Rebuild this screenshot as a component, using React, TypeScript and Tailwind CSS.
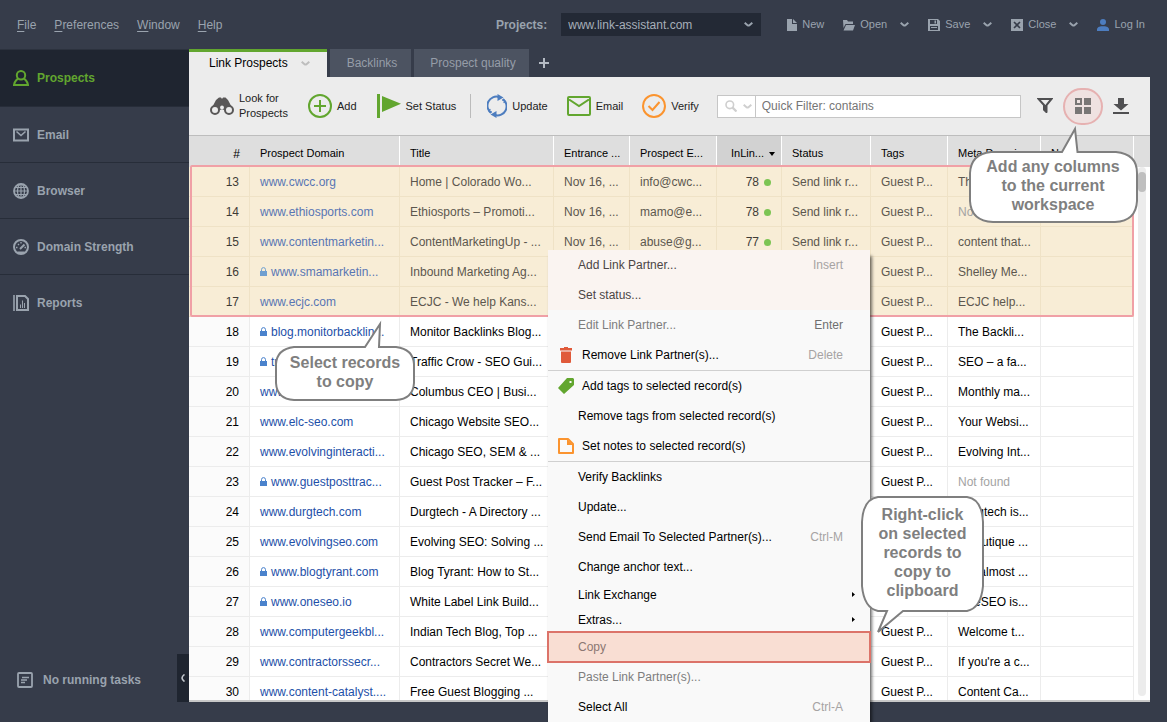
import type { ReactNode } from "react";
import clsx from "clsx";

type Row = {
  n: number;
  domain: string;
  title: string;
  meta: string;
  secure?: boolean;
  email?: string;
  links?: number;
};

const ROWS: Row[] = [
  { n: 13, domain: "www.cwcc.org", title: "Home | Colorado Wo...", email: "info@cwc...", links: 78, meta: "The Color..." },
  { n: 14, domain: "www.ethiosports.com", title: "Ethiosports – Promoti...", email: "mamo@e...", links: 78, meta: "Not found" },
  { n: 15, domain: "www.contentmarketin...", title: "ContentMarketingUp - ...", email: "abuse@g...", links: 77, meta: "content that..." },
  { n: 16, domain: "www.smamarketin...", title: "Inbound Marketing Ag...", meta: "Shelley Me...", secure: true },
  { n: 17, domain: "www.ecjc.com", title: "ECJC - We help Kans...", meta: "ECJC help..." },
  { n: 18, domain: "blog.monitorbacklin...", title: "Monitor Backlinks Blog...", meta: "The Backli...", secure: true },
  { n: 19, domain: "trafficcrow.com", title: "Traffic Crow - SEO Gui...", meta: "SEO – a fa...", secure: true },
  { n: 20, domain: "www.columbusceo.c...", title: "Columbus CEO | Busi...", meta: "Monthly ma..." },
  { n: 21, domain: "www.elc-seo.com", title: "Chicago Website SEO...", meta: "Your Websi..." },
  { n: 22, domain: "www.evolvinginteracti...", title: "Chicago SEO, SEM & ...", meta: "Evolving Int..." },
  { n: 23, domain: "www.guestposttrac...", title: "Guest Post Tracker – F...", meta: "Not found", secure: true },
  { n: 24, domain: "www.durgtech.com", title: "Durgtech - A Directory ...", meta: "Durgtech is..." },
  { n: 25, domain: "www.evolvingseo.com", title: "Evolving SEO: Solving ...", meta: "A boutique ..." },
  { n: 26, domain: "www.blogtyrant.com", title: "Blog Tyrant: How to St...", meta: "For almost ...", secure: true },
  { n: 27, domain: "www.oneseo.io", title: "White Label Link Build...", meta: "OneSEO is...", secure: true },
  { n: 28, domain: "www.computergeekbl...", title: "Indian Tech Blog, Top ...", meta: "Welcome t..." },
  { n: 29, domain: "www.contractorssecr...", title: "Contractors Secret We...", meta: "If you're a c..." },
  { n: 30, domain: "www.content-catalyst....", title: "Free Guest Blogging ...", meta: "Content Ca..." },
];

const LAST_SELECTED = 17;

function Chevron({ className }: { className?: string }) {
  return (
    <svg viewBox="0 0 9 5" className={clsx("w-[9px] h-[5px] shrink-0", className)} fill="none" stroke="currentColor" strokeWidth="2">
      <path d="M.7 .8L3.500 3.200Q4.500 3.900 5.500 3.200L8.300 .8" />
    </svg>
  );
}

function Lock({ faded }: { faded?: boolean }) {
  return (
    <svg viewBox="0 0 7 9" className={clsx("inline-block w-[7px] h-[9px] mr-1 align-baseline", faded ? "text-[#6f9fd0]" : "text-[#4a82cc]")}>
      <rect x="0" y="4" width="7" height="5" fill="currentColor" />
      <path d="M1.500 4.200V2.600a2 2 0 0 1 4 0v1.600" fill="none" stroke="currentColor" strokeWidth="1" />
    </svg>
  );
}

/* ---------- top bar ---------- */

const MENUS = ["File", "Preferences", "Window", "Help"];

function TopButton({ icon, label, menu }: { icon: ReactNode; label: string; menu?: boolean }) {
  return (
    <button className="flex items-center text-[11px]">
      {icon}
      <span className="ml-[5px]">{label}</span>
      {menu && <Chevron className="ml-[13px]" />}
    </button>
  );
}

function TopBar() {
  return (
    <header className="flex items-center h-[49px] pl-[17px] pr-[22px] text-[#9aa3ae] shrink-0">
      <nav className="flex gap-[18px]">
        {MENUS.map((m) => (
          <a key={m} href="#">
            <span className="underline underline-offset-2">{m[0]}</span>
            {m.slice(1)}
          </a>
        ))}
      </nav>
      <div className="flex items-center ml-auto">
        <label htmlFor="project" className="font-bold mr-[14px]">
          Projects:
        </label>
        <div className="relative flex items-center mr-[26px]">
          <select id="project" className="appearance-none w-[200px] h-[23px] pl-[7px] bg-[#232935] text-[#a7afb9]">
            <option>www.link-assistant.com</option>
          </select>
          <Chevron className="absolute right-[8px] pointer-events-none" />
        </div>
        <div className="flex items-center gap-[19px]">
          <TopButton
            label="New"
            icon={
              <svg viewBox="0 0 10 12" className="w-[10px] h-[12px]" fill="currentColor">
                <path d="M0 0h5v5h5v7H0z M6 0l4 4H6z" />
              </svg>
            }
          />
          <TopButton
            label="Open"
            menu
            icon={
              <svg viewBox="0 0 12 12" className="w-[12px] h-[12px]" fill="currentColor">
                <path d="M0 1h4l1 1.500h5V5H2.500L.500 9z M3 6h9l-2 5.500H.500z" />
              </svg>
            }
          />
          <TopButton
            label="Save"
            menu
            icon={
              <svg viewBox="0 0 12 12" className="w-[12px] h-[12px]" fill="currentColor" fillRule="evenodd">
                <path d="M0 0h10l2 2v10H0z M2 1v4h7V1z M2 7v4h8V7z M3 8h6v1H3z M6.500 1.500h1.500v3H6.500z" />
              </svg>
            }
          />
          <TopButton
            label="Close"
            menu
            icon={
              <svg viewBox="0 0 12 12" className="w-[12px] h-[12px]">
                <rect width="12" height="12" fill="currentColor" />
                <path d="M3 3l6 6M9 3l-6 6" stroke="#363c4a" strokeWidth="1.600" />
              </svg>
            }
          />
          <TopButton
            label="Log In"
            icon={
              <svg viewBox="0 0 12 12" className="w-[12px] h-[12px] text-[#4d7dbf]" fill="currentColor">
                <circle cx="6" cy="3" r="3" />
                <path d="M0 12V9.500Q1 7.500 4 7.200h4q3 .300 4 2.300V12z" />
              </svg>
            }
          />
        </div>
      </div>
    </header>
  );
}

/* ---------- sidebar ---------- */

const NAV = [
  {
    label: "Prospects",
    icon: (
      <>
        <circle cx="8" cy="5.200" r="4.200" />
        <path d="M5 8.500L3 10.500Q1.500 12 1 15h14Q14.500 12 13 10.500L11 8.500" />
      </>
    ),
  },
  {
    label: "Email",
    icon: (
      <>
        <path d="M1 2.500h14v11H1z" />
        <path d="M3.500 4.500l4.500 4 4.500-4" strokeWidth="1.600" />
      </>
    ),
  },
  {
    label: "Browser",
    icon: (
      <g strokeWidth="1.200">
        <circle cx="8" cy="8" r="7" strokeWidth="1.800" />
        <ellipse cx="8" cy="8" rx="3.500" ry="7" />
        <path d="M8 1v14M1 8h14M2 4.500h12M2 11.500h12" />
      </g>
    ),
  },
  {
    label: "Domain Strength",
    icon: (
      <>
        <circle cx="8" cy="8" r="7" />
        <path d="M4.500 13.500h7" />
        <path d="M7 10L11.500 5.500" />
        <path d="M3 8.500h1.500M5 5l1 1M8 3v1.500M11.500 8.500h1.500" strokeWidth="1.400" />
      </>
    ),
  },
  {
    label: "Reports",
    icon: (
      <>
        <path d="M1 0v16" strokeWidth="1.600" />
        <path d="M4 1h8l3 3v11H4z" />
        <path d="M7.500 13V9.500M9.500 13V5.500M11.500 13V8" strokeWidth="1" />
      </>
    ),
  },
];

function Sidebar() {
  return (
    <aside className="flex flex-col w-[189px] shrink-0 font-bold text-[#9aa3ae]">
      <nav className="border-t border-[#2c323e]">
        {NAV.map((item, i) => (
          <a
            key={item.label}
            href="#"
            className={clsx(
              "flex items-center pl-[13px] gap-2",
              i === 0 ? "h-[57px] bg-[#1f2530] text-[#62a62f]" : "h-14",
              i < NAV.length - 1 && "border-b border-[#272d39]"
            )}
          >
            <svg viewBox="0 0 16 16" className="w-4 h-4" fill="none" stroke="currentColor" strokeWidth="2">
              {item.icon}
            </svg>
            {item.label}
          </a>
        ))}
      </nav>
      <div className="flex items-stretch mt-auto h-12 pl-[17px] mb-5">
        <div className="flex items-center gap-[10px] pt-1">
          <svg viewBox="0 0 16 16" className="w-4 h-4" fill="none" stroke="currentColor" strokeWidth="1.800">
            <rect x="1" y="1" width="14" height="14" rx="1" />
            <path d="M5 5.500h7M4 8h6M4 10.500h4" strokeWidth="1.500" />
          </svg>
          No running tasks
        </div>
        <button aria-label="Collapse sidebar" className="flex items-center justify-center ml-auto w-3 h-12 bg-[#1f2530]">
          <svg viewBox="0 0 4 8" className="w-1 h-2" fill="none" stroke="#c3c8ce" strokeWidth="1.600">
            <path d="M3.500 .5Q1 2.500 1 4t2.500 3.500" />
          </svg>
        </button>
      </div>
    </aside>
  );
}

/* ---------- tabs and toolbar ---------- */

function Tabs() {
  return (
    <div className="flex items-stretch h-7 gap-[3px] text-[#969da8] shrink-0">
      <button className="flex items-center w-[138px] pl-5 pb-[3px] bg-[#ececec] text-black border-t-3 border-[#62a62f]">
        Link Prospects
        <Chevron className="ml-[13px] text-[#bdbdbd]" />
      </button>
      <button className="w-[81px] pl-[3px] bg-[#4c5361]">Backlinks</button>
      <button className="w-[115px] pl-[3px] bg-[#4c5361]">Prospect quality</button>
      <button aria-label="New tab" className="pl-[7px]">
        <svg viewBox="0 0 10 10" className="w-[10px] h-[10px]" stroke="#b4bac3" strokeWidth="2">
          <path d="M5 0v10M0 5h10" />
        </svg>
      </button>
    </div>
  );
}

function Tool({ icon, children }: { icon: ReactNode; children: ReactNode }) {
  return (
    <button className="flex items-center gap-[5px] text-[11px] leading-[15px] text-left whitespace-nowrap text-[#222]">
      {icon}
      <span>{children}</span>
    </button>
  );
}

function Toolbar() {
  return (
    <div className="flex items-center h-[59px] px-[21px] bg-[#ececec] border-b border-[#bdbdbd] shrink-0">
      <div className="flex items-center gap-5">
        <Tool
          icon={
            <svg viewBox="0 0 24 18" className="w-6 h-[18px]">
              <path d="M9 .5L11 .5 11.500 1.500h1L13 .5h2.500L18 3l5 9.500-4 2-6.500-2h-1L5 14.500l-4-2L6 3z" fill="#595757" />
              <circle cx="5" cy="13" r="4" fill="#ececec" stroke="#595757" strokeWidth="2" />
              <circle cx="19" cy="13" r="4" fill="#ececec" stroke="#595757" strokeWidth="2" />
              <circle cx="12" cy="10.500" r="1.900" fill="#ececec" />
            </svg>
          }
        >
          Look for
          <br />
          Prospects
        </Tool>
        <Tool
          icon={
            <svg viewBox="0 0 24 24" className="w-6 h-6" fill="none" stroke="#62a62f" strokeWidth="2">
              <circle cx="12" cy="12" r="11" />
              <path d="M12 6v12M6 12h12" />
            </svg>
          }
        >
          Add
        </Tool>
        <Tool
          icon={
            <svg viewBox="0 0 24 24" className="w-6 h-6" fill="#62a62f">
              <path d="M0 0h3v24H0z M5 2l19 7.800L5 18z" />
            </svg>
          }
        >
          Set Status
        </Tool>
      </div>
      <div className="w-px h-6 ml-[14px] mr-4 bg-[#bbb]" />
      <div className="flex items-center gap-[19px]">
        <Tool
          icon={
            <svg viewBox="0 0 20 24" className="w-5 h-6" fill="none" stroke="#4d7dbf" strokeWidth="2">
              <path d="M12 3A9 9 0 0 0 4 18.800M8 21A9 9 0 0 0 16 5.200" />
              <path d="M2 15.500l2.500 4M18 8.500l-2.500-4" strokeWidth="2.500" strokeDasharray="1.500 1" />
              <path d="M10.500 0l6 3.500-6 3.500z M9.500 24l-6-3.500 6-3.500z" fill="#4d7dbf" stroke="none" />
            </svg>
          }
        >
          Update
        </Tool>
        <Tool
          icon={
            <svg viewBox="0 0 24 20" className="w-6 h-5" fill="none" stroke="#62a62f" strokeWidth="2">
              <rect x="1" y="1" width="22" height="18" rx="1" />
              <path d="M2 3.500l10 6.500 10-6.500" />
            </svg>
          }
        >
          Email
        </Tool>
        <Tool
          icon={
            <svg viewBox="0 0 24 24" className="w-6 h-6" fill="none" stroke="#fb942f" strokeWidth="2">
              <circle cx="12" cy="12" r="11" />
              <path d="M6.500 12l4 4 7-8" />
            </svg>
          }
        >
          Verify
        </Tool>
      </div>
      <div className="flex flex-1 items-center h-[23px] ml-[18px] mr-4 bg-white border border-[#c6c6c6]">
        <button aria-label="Search options" className="flex items-center gap-[6px] w-[38px] h-full pl-[7px] border-r border-[#c6c6c6] text-[#cfcfcf]">
          <svg viewBox="0 0 12 12" className="w-3 h-3" fill="none" stroke="currentColor" strokeWidth="1.600">
            <circle cx="4.800" cy="4.800" r="3.800" />
            <path d="M7.600 7.600L11.500 11.500" strokeWidth="2.200" />
          </svg>
          <Chevron />
        </button>
        <input aria-label="Quick filter" placeholder="Quick Filter: contains" className="flex-1 min-w-0 px-[6px] outline-none placeholder:text-[#757575]" />
      </div>
      <div className="flex items-center gap-[10px] text-[#4f4f51]">
        <button aria-label="Filter">
          <svg viewBox="0 0 16 16" className="w-4 h-4" fill="none" stroke="currentColor" strokeWidth="2">
            <path d="M1.500 1h13L9.500 7v6L7 11.500V7z" />
            <path d="M7 7.500h2.500v7.500L7 12.500z" fill="currentColor" strokeWidth="1" />
          </svg>
        </button>
        <button aria-label="Columns" className="flex items-center justify-center w-10 h-[37px] rounded-full border-2 border-[#e6b1b1] bg-[#efe2e1]">
          <svg viewBox="0 0 16 16" className="w-4 h-4" fill="#797675">
            <path d="M0 0h7v7H0z M2 2v3h3V2z" fillRule="evenodd" />
            <path d="M9 0h7v7H9z M0 9h7v7H0z M9 9h7v7H9z" />
          </svg>
        </button>
        <button aria-label="Download">
          <svg viewBox="0 0 16 16" className="w-4 h-4" fill="currentColor">
            <path d="M5 0h6v6h4.500L8 12.500.500 6H5z M0 14h16v2H0z" />
          </svg>
        </button>
      </div>
    </div>
  );
}

/* ---------- table ---------- */

const HEAD = ["Prospect Domain", "Title", "Entrance ...", "Prospect E...", "InLin...", "Status", "Tags", "Meta Descri...", "Notes"];

function ProspectTable() {
  return (
    <div className="relative flex flex-1 min-h-0 overflow-hidden bg-white border-b-2 border-[#c8c8c8]">
      <div className="flex-1 min-w-0">
        <table className="w-full table-fixed border-separate border-spacing-0 whitespace-nowrap">
          <colgroup>
            <col className="w-[61px]" />
            <col className="w-[150px]" />
            <col />
            <col className="w-[76px]" />
            <col className="w-[87px]" />
            <col className="w-[65px]" />
            <col className="w-[89px]" />
            <col className="w-[77px]" />
            <col className="w-[93px]" />
            <col className="w-[93px]" />
          </colgroup>
          <thead>
            <tr className="h-[31px] bg-[#dedede] text-[11px] text-left">
              <th className="pr-[10px] pt-1 font-normal text-right text-xs">#</th>
              {HEAD.map((h) => (
                <th
                  key={h}
                  className={clsx(
                    "pt-1 font-normal overflow-hidden border-r border-white",
                    h === "InLin..." ? "bg-[#d2d2d2] pl-[14px]" : "pl-[10px]"
                  )}
                >
                  {h}
                  {h === "InLin..." && (
                    <svg viewBox="0 0 6 4" className="inline-block w-[6px] h-[4px] ml-[5px] align-middle">
                      <path d="M0 0h6L3 4z" />
                    </svg>
                  )}
                </th>
              ))}
            </tr>
          </thead>
          <tbody>
            {ROWS.map((r) => {
              const selected = r.n <= LAST_SELECTED;
              const cell = clsx("border-r border-b px-[10px]", selected ? "border-[#efe2c6]" : "border-[#ececec]");
              return (
                <tr key={r.n} className={clsx("h-[30px]", selected ? "bg-[#f8edd6] text-[#5c574e]" : "text-black")}>
                  <td className={clsx(cell, "text-right", selected ? "text-[#3f3c36]" : "bg-[#fbfbfb]")}>{r.n}</td>
                  <td className={cell}>
                    {r.secure && <Lock faded={selected} />}
                    <a href="#" className={selected ? "text-[#5876b4]" : "text-[#1d4fa8]"}>
                      {r.domain}
                    </a>
                  </td>
                  <td className={cell}>{r.title}</td>
                  <td className={cell}>Nov 16, ...</td>
                  <td className={cell}>{r.email}</td>
                  <td className={clsx(cell, "text-right text-[#3f3c36]")}>
                    {r.links}
                    {r.links && <span className="inline-block w-[7px] h-[7px] ml-[5px] rounded-full bg-[#7cc453]" />}
                  </td>
                  <td className={cell}>Send link r...</td>
                  <td className={cell}>Guest P...</td>
                  <td className={clsx(cell, r.meta === "Not found" && "text-[#a3a3a3]")}>{r.meta}</td>
                  <td className={cell} />
                </tr>
              );
            })}
          </tbody>
        </table>
      </div>
      <div className="flex flex-col w-4 shrink-0">
        <div className="h-[31px] bg-[#dedede]" />
        <div className="flex-1 w-2 ml-1 mb-1 pt-[5px] rounded-full bg-[#ececec]">
          <div className="h-5 rounded-full bg-[#bfbfbf]" />
        </div>
      </div>
      {/* selection frame */}
      <div className="absolute left-px right-4 top-[29px] h-[152px] border-2 border-[#f0a0a6] rounded-xs pointer-events-none" />
    </div>
  );
}

/* ---------- context menu ---------- */

type Item = {
  label: string;
  keys?: string;
  icon?: ReactNode;
  tone?: "tinted" | "disabled" | "active";
  sub?: boolean;
  line?: boolean;
};

const ITEMS: Item[] = [
  { label: "Add Link Partner...", keys: "Insert", tone: "tinted" },
  { label: "Set status...", tone: "tinted" },
  { label: "Edit Link Partner...", keys: "Enter", tone: "disabled" },
  {
    label: "Remove Link Partner(s)...",
    keys: "Delete",
    icon: <path d="M2 1h4V0h4v1h4v2.500H2z M3 4.500h10V15q0 1-1 1H4q-1 0-1-1z" fill="#e05a3a" />,
  },
  {
    label: "Add tags to selected record(s)",
    line: true,
    icon: <path d="M9 0h6l1 1v6L6 16 0 10z M11.500 3v2h2V3z" fill="#62a62f" fillRule="evenodd" />,
  },
  { label: "Remove tags from selected record(s)" },
  {
    label: "Set notes to selected record(s)",
    icon: (
      <>
        <path d="M1 1h9l5 5v9H1z" fill="none" stroke="#fb942f" strokeWidth="2" strokeLinejoin="round" />
        <path d="M9 1l6 6H9z" fill="#fb942f" />
      </>
    ),
  },
  { label: "Verify Backlinks", line: true },
  { label: "Update..." },
  { label: "Send Email To Selected Partner(s)...", keys: "Ctrl-M" },
  { label: "Change anchor text..." },
  { label: "Link Exchange", sub: true },
  { label: "Extras...", sub: true },
  { label: "Copy", tone: "active" },
  { label: "Paste Link Partner(s)...", tone: "disabled" },
  { label: "Select All", keys: "Ctrl-A" },
];

function ContextMenu() {
  return (
    <div role="menu" className="absolute left-[548px] top-[250px] w-[322px] bg-[#f9f9f9] shadow-[2px_6px_3px_rgba(0,0,0,0.55)]">
      {ITEMS.map((it) => (
        <button
          key={it.label}
          role="menuitem"
          className={clsx(
            "flex items-center w-full text-left",
            it.sub ? "h-[25px] pr-[15px]" : "pr-[27px]",
            !it.sub && (it.line ? "h-[31px] border-t border-[#d0d0d0]" : "h-[30px]"),
            it.icon ? "pl-[10px]" : "pl-[30px]",
            it.tone === "tinted" && "bg-[#faf4f1] text-[#4b4545]",
            it.tone === "disabled" && "text-[#7d7d7d]",
            it.tone === "active" && "bg-[#f9ded3] text-[#8b7772] outline-2 -outline-offset-1 outline-[#dc7369]",
            !it.tone && "text-black"
          )}
        >
          {it.icon && (
            <svg viewBox="0 0 16 16" className="w-4 h-4 mr-2">
              {it.icon}
            </svg>
          )}
          {it.label}
          {it.keys && <span className={clsx("ml-auto", it.tone === "disabled" ? "text-[#6f6f6f]" : "text-[#a6a3a3]")}>{it.keys}</span>}
          {it.sub && (
            <svg viewBox="0 0 3 5" className="w-[3px] h-[5px] ml-auto">
              <path d="M0 0l3 2.500L0 5z" />
            </svg>
          )}
        </button>
      ))}
    </div>
  );
}

/* ---------- callouts ---------- */

function Callout({ className, box, path, children }: { className: string; box: string; path: string; children: ReactNode }) {
  return (
    <div className={clsx("absolute text-base leading-[19px] font-bold text-center text-[#7f7f7f]", className)}>
      <svg viewBox={box} className="absolute inset-0 w-full h-full" fill="#fff" stroke="#7f7f7f" strokeWidth="2">
        <path d={path} />
      </svg>
      <p className="relative">{children}</p>
    </div>
  );
}

export default function App() {
  return (
    <div className="relative flex flex-col h-screen overflow-hidden bg-[#363c4a] font-['Liberation_Sans',Arial,sans-serif] text-xs">
      <TopBar />
      <div className="flex flex-1 min-h-0">
        <Sidebar />
        <main className="flex flex-col flex-1 min-w-0 mr-[17px] mb-5">
          <Tabs />
          <Toolbar />
          <ProspectTable />
        </main>
      </div>

      <ContextMenu />

      <Callout
        className="right-7 top-[125px] w-[172px] h-[98px] pt-8"
        box="0 0 172 98"
        path="M24 27H95L108 4 110.500 27H149Q170 29 170 48V76Q169 96 148 97H26Q4 96 3 76V48Q4 29 24 27z"
      >
        Add any columns
        <br />
        to the current
        <br />
        workspace
      </Callout>
      <Callout
        className="left-[275px] top-[319px] w-[140px] h-[82px] pt-[34px]"
        box="0 0 140 82"
        path="M19 28H90L105 5 104 28H121Q138 30 139 45V64Q138 80 121 81H19Q2 80 1 64V45Q2 30 19 28z"
      >
        Select records
        <br />
        to copy
      </Callout>
      <Callout
        className="left-[861px] top-[496px] w-[123px] h-[140px] pt-[9px]"
        box="0 0 123 140"
        path="M17 1H106Q121 3 122 26V90Q120 112 106 115H42L17 136 26 115H17Q3 112 1 90V26Q2 3 17 1z"
      >
        Right-click
        <br />
        on selected
        <br />
        records to
        <br />
        copy to
        <br />
        clipboard
      </Callout>
    </div>
  );
}
